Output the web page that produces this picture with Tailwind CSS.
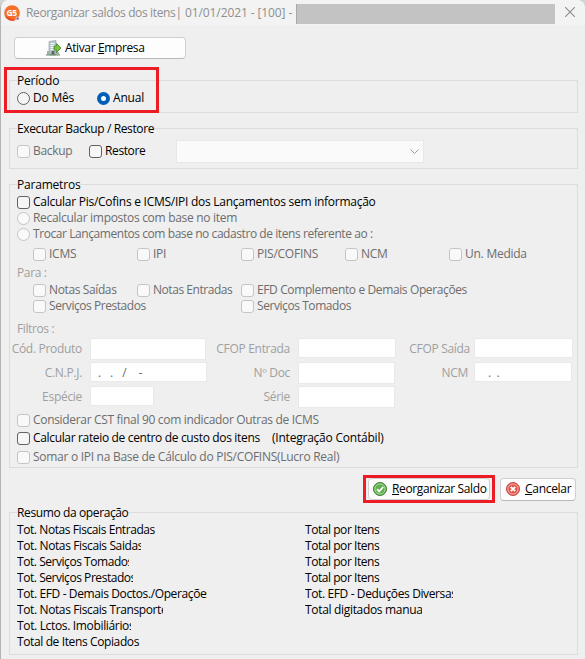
<!DOCTYPE html>
<html lang="pt-BR">
<head>
  <meta charset="UTF-8"/>
  <meta name="viewport" content="width=device-width, initial-scale=1.0"/>
  <title>Reorganizar saldos dos itens</title>
  <script src="https://cdn.jsdelivr.net/npm/@tailwindcss/browser@4"></script>
</head>
<body class="bg-[#d4d4d4]">

  <div class="relative w-[585px] h-[659px] overflow-hidden rounded-t-lg border-l border-[#b4b4b4] bg-[#efefef] pl-2 font-['Open_Sans','Noto_Sans',sans-serif] text-[12px] leading-4 tracking-[-0.38px] text-black whitespace-nowrap">

    <!-- Title bar -->
    <div class="-ml-2 flex h-[25px] items-center bg-[#f3f3f3] pl-[3px] text-[#8f8f8f]">
      <svg class="h-4 w-4 shrink-0" viewBox="0 0 16 16">
        <circle cx="8" cy="8" r="7.8" fill="#f4702a"/>
        <path d="M1 11a7.8 7.8 0 0 0 10 4.200z" fill="#e8452c"/>
        <text x="7.600" y="11" text-anchor="middle" font-family="Open Sans" font-size="8.500" font-weight="700" fill="#fff">G5</text>
        <circle cx="13.500" cy="13.500" r="2" fill="#d9c8d4"/>
        <circle cx="13.500" cy="13.500" r="1" fill="#9a4560"/>
      </svg>
      <span class="ml-[6px] w-[159px] tracking-[-0.36px]">Reorganizar saldos dos itens|</span>
      <span class="tracking-[-0.1px]">01/01/2021 - [100] - </span>
      <div class="absolute left-[295px] top-1 h-5 w-[259px] border-l border-[#a8a8a8] bg-[#c3c3c3]"></div>
      <svg class="absolute left-[564px] top-[7px] h-[10px] w-[10px]" viewBox="0 0 10 10" stroke="#8c8c8c" stroke-width="1.100"><path d="M0 0l10 10M10 0L0 10"/></svg>
    </div>

    <button class="mt-3 ml-[5px] flex h-[22px] w-[172px] items-center rounded-[4px] border border-[#d0d0d0] border-b-[#b8b8b8] bg-[#fdfdfd] pl-[31px]">
      <svg class="h-4 w-[15px]" viewBox="0 0 15 16">
        <path d="M3 1.500L10 .5V15H3z" fill="#b9c8d0" stroke="#8b9aa2" stroke-width=".6"/>
        <path d="M4.500 3.500h4M4.500 5.500h4M4.500 7.500h4M4.500 9.500h4" stroke="#f4f8fa"/>
        <path d="M5.500 11h3v4h-3z" fill="#59656b"/>
        <path d="M0 14.300h14v1.200H0z" fill="#6d8f6a"/>
        <path d="M1 11h3v3.500H1zM10 12h3v2.500h-3z" fill="#9fb39c"/>
        <path d="M8 6h2.500V3.500L15 8l-4.500 4.500V10H8z" fill="#7cc142" stroke="#3b8a22" stroke-width=".8"/>
      </svg>
      <span class="ml-1">Ativar <u class="underline-offset-1">E</u>mpresa</span>
    </button>

    <!-- Período -->
    <div class="mt-[21px] h-[33px] w-[569px] border border-[#dcdcdc] pl-[7px] tracking-[-0.2px]">
      <div class="-mt-2 w-fit bg-[#efefef]">Período</div>
      <div class="mt-px flex h-4 items-center">
        <span class="h-[13px] w-[13px] rounded-full border border-[#626262] bg-[#f6f6f6]"></span>
        <span class="ml-[3px] w-[64px]">Do Mês</span>
        <span class="h-[13px] w-[13px] rounded-full border-4 border-[#005fb8] bg-white"></span>
        <span class="ml-[3px]">Anual</span>
      </div>
    </div>

    <!-- Executar Backup / Restore -->
    <div class="mt-[15px] h-[41px] w-[569px] border border-[#dcdcdc] pl-[7px]">
      <div class="-mt-2 w-fit bg-[#efefef]">Executar Backup / Restore</div>
      <div class="mt-[3px] flex h-[23px] items-center">
        <span class="h-[13px] w-[13px] rounded-[3px] border border-[#c5c5c5] bg-[#f9f9f9]"></span>
        <span class="-mt-px ml-[3px] w-[56px] text-[#6d6d6d] tracking-[-0.3px]">Backup</span>
        <span class="h-[13px] w-[13px] rounded-[3px] border border-[#626262] bg-[#f6f6f6]"></span>
        <span class="-mt-px ml-[3px] w-[71px]">Restore</span>
        <div class="flex h-[23px] w-[248px] items-center justify-end border border-[#e8e8e8] bg-[#fafafa] pr-1">
          <svg class="h-[5px] w-[9px]" viewBox="0 0 9 5" fill="none" stroke="#a0a0a0"><path d="M.5.5l4 4 4-4"/></svg>
        </div>
      </div>
    </div>

    <!-- Parametros -->
    <div class="mt-[15px] h-[284px] w-[569px] border border-[#dcdcdc] pl-[7px] text-[#6d6d6d]">
      <div class="-mt-2 w-fit bg-[#efefef] text-black tracking-[-0.2px]">Parametros</div>
      <div class="mt-px flex h-4 items-center gap-[3px] text-black">
        <span class="h-[13px] w-[13px] rounded-[3px] border border-[#626262] bg-[#f6f6f6]"></span>
        <span class="tracking-[-0.26px]">Calcular Pis/Cofins e ICMS/IPI dos Lançamentos sem informação</span>
      </div>
      <div class="flex h-4 items-center gap-[3px]">
        <span class="h-[13px] w-[13px] rounded-full border border-[#c5c5c5] bg-[#f9f9f9]"></span>
        <span class="tracking-[-0.3px]">Recalcular impostos com base no item</span>
      </div>
      <div class="flex h-4 items-center gap-[3px]">
        <span class="h-[13px] w-[13px] rounded-full border border-[#c5c5c5] bg-[#f9f9f9]"></span>
        <span class="tracking-[-0.43px]">Trocar Lançamentos com base no cadastro de itens referente ao :</span>
      </div>

      <div class="mt-1 ml-4 grid h-4 grid-cols-[repeat(5,104px)] tracking-[-0.25px]">
        <div class="flex items-center gap-[3px]"><span class="h-[13px] w-[13px] rounded-[3px] border border-[#c5c5c5] bg-[#f9f9f9]"></span><span>ICMS</span></div>
        <div class="flex items-center gap-[3px]"><span class="h-[13px] w-[13px] rounded-[3px] border border-[#c5c5c5] bg-[#f9f9f9]"></span><span>IPI</span></div>
        <div class="flex items-center gap-[3px]"><span class="h-[13px] w-[13px] rounded-[3px] border border-[#c5c5c5] bg-[#f9f9f9]"></span><span>PIS/COFINS</span></div>
        <div class="flex items-center gap-[3px]"><span class="h-[13px] w-[13px] rounded-[3px] border border-[#c5c5c5] bg-[#f9f9f9]"></span><span>NCM</span></div>
        <div class="flex items-center gap-[3px]"><span class="h-[13px] w-[13px] rounded-[3px] border border-[#c5c5c5] bg-[#f9f9f9]"></span><span>Un. Medida</span></div>
      </div>

      <div class="mt-[3px] h-4 text-[#a0a0a0]">Para :</div>
      <div class="mt-px ml-4 grid grid-cols-[104px_104px_auto] auto-rows-[16px]">
        <div class="flex items-center gap-[3px]"><span class="h-[13px] w-[13px] rounded-[3px] border border-[#c5c5c5] bg-[#f9f9f9]"></span><span>Notas Saídas</span></div>
        <div class="flex items-center gap-[3px]"><span class="h-[13px] w-[13px] shrink-0 rounded-[3px] border border-[#c5c5c5] bg-[#f9f9f9]"></span><span class="tracking-[-0.45px]">Notas Entradas</span></div>
        <div class="flex items-center gap-[3px]"><span class="h-[13px] w-[13px] rounded-[3px] border border-[#c5c5c5] bg-[#f9f9f9]"></span><span>EFD Complemento e Demais Operações</span></div>
        <div class="col-span-2 flex items-center gap-[3px]"><span class="h-[13px] w-[13px] rounded-[3px] border border-[#c5c5c5] bg-[#f9f9f9]"></span><span class="tracking-[-0.45px]">Serviços Prestados</span></div>
        <div class="flex items-center gap-[3px]"><span class="h-[13px] w-[13px] rounded-[3px] border border-[#c5c5c5] bg-[#f9f9f9]"></span><span class="tracking-[-0.43px]">Serviços Tomados</span></div>
      </div>

      <!-- Filtros -->
      <div class="mt-[7px] h-4 text-[#a0a0a0]">Filtros :</div>
      <div class="-ml-[7px] mt-px grid grid-cols-[72px_8px_117px_83px_8px_98px_79px_98px] auto-rows-[24px] text-right text-[#a0a0a0] tracking-[-0.3px]">
        <span class="pt-[3px]">Cód. Produto</span>
        <div class="col-start-3 h-[22px] w-[116px] border border-[#e9e9e9] bg-white"></div>
        <span class="pt-[3px]">CFOP Entrada</span>
        <div class="col-start-6 h-5 w-[98px] border border-[#e9e9e9] bg-white"></div>
        <span class="pt-[3px] pr-[5px]">CFOP Saída</span>
        <div class="-ml-px h-5 w-[99px] border border-[#e9e9e9] bg-white"></div>

        <span class="pt-[3px]">C.N.P.J.</span>
        <div class="col-start-3 h-5 w-[117px] border border-[#e9e9e9] bg-white pl-[7px] text-left text-[#6d6d6d] leading-[19px] whitespace-pre tracking-[-0.1px]">.   .   /    -</div>
        <span class="pt-[3px]">Nº Doc</span>
        <div class="col-start-6 h-[22px] w-[97px] border border-[#e9e9e9] bg-white"></div>
        <span class="pt-[3px] pr-[7px]">NCM</span>
        <div class="-ml-px h-5 w-[98px] border border-[#e9e9e9] bg-white pl-[13px] text-left text-[#6d6d6d] leading-[19px] whitespace-pre">.  .</div>

        <span class="pt-[3px]">Espécie</span>
        <div class="col-start-3 h-5 w-[64px] border border-[#e9e9e9] bg-white"></div>
        <span class="pt-[3px]">Série</span>
        <div class="col-start-6 h-[22px] w-[97px] border border-[#e9e9e9] bg-white"></div>
      </div>

      <div class="mt-[2px] flex h-4 items-center gap-[3px]">
        <span class="h-[13px] w-[13px] rounded-[3px] border border-[#c5c5c5] bg-[#f9f9f9]"></span>
        <span class="tracking-[-0.32px]">Considerar CST final 90 com indicador Outras de ICMS</span>
      </div>
      <div class="mt-[2px] flex h-4 items-center gap-[3px] text-black">
        <span class="h-[13px] w-[13px] rounded-[3px] border border-[#626262] bg-[#f6f6f6]"></span>
        <span class="w-[236px] tracking-[-0.34px]">Calcular rateio de centro de custo dos itens</span>
        <span class="-mt-px tracking-[-0.22px]">(Integração Contábil)</span>
      </div>
      <div class="mt-[3px] flex h-4 items-center gap-[3px]">
        <span class="h-[13px] w-[13px] rounded-[3px] border border-[#c5c5c5] bg-[#f9f9f9]"></span>
        <span class="tracking-[-0.28px]">Somar o IPI na Base de Cálculo do PIS/COFINS(Lucro Real)</span>
      </div>
    </div>

    <!-- Buttons -->
    <div class="mt-[7px] ml-[354px] flex h-7 items-center gap-[5px]">
      <div class="h-7 w-[132px] border-[3px] border-[#ed1c24] px-[2px]">
        <button class="flex h-[22px] w-[122px] items-center rounded-[4px] border border-[#d0d0d0] bg-[#fdfdfd] pl-1">
          <svg class="h-[14px] w-[14px]" viewBox="0 0 14 14">
            <circle cx="7" cy="7" r="6.500" fill="#5fb04c" stroke="#3c7f35"/>
            <circle cx="7" cy="7" r="5.100" fill="none" stroke="#b5deaa" stroke-width=".9"/>
            <path d="M4 7.200l2.200 2.200L10.200 5" fill="none" stroke="#fff" stroke-width="1.800"/>
          </svg>
          <span class="ml-[5px]"><u class="underline-offset-1">R</u>eorganizar Saldo</span>
        </button>
      </div>
      <button class="flex h-[23px] w-[76px] items-center rounded-[4px] border border-[#d0d0d0] border-b-[#b8b8b8] bg-[#fdfdfd] pl-[5px]">
        <svg class="h-[14px] w-[14px]" viewBox="0 0 14 14">
          <circle cx="7" cy="7" r="6.500" fill="#e2574c" stroke="#c5473f"/>
          <circle cx="7" cy="7" r="5.100" fill="none" stroke="#f6bdb7" stroke-width=".9"/>
          <path d="M4.800 4.800l4.400 4.400M9.200 4.800L4.800 9.200" stroke="#fff" stroke-width="1.900"/>
        </svg>
        <span class="ml-[5px] tracking-[-0.3px]"><u class="underline-offset-1">C</u>ancelar</span>
      </button>
    </div>

    <!-- Resumo da operação -->
    <div class="mt-[9px] h-[143px] w-[569px] border border-[#dcdcdc] pl-[7px]">
      <div class="-mt-2 w-fit bg-[#efefef]">Resumo da operação</div>
      <div class="mt-px flex">
        <div class="w-[288px]">
          <div class="tracking-[-0.42px]">Tot. Notas Fiscais Entradas</div>
          <div class="w-[124px] overflow-hidden">Tot. Notas Fiscais Saidas</div>
          <div class="w-[112px] overflow-hidden tracking-[-0.45px]">Tot. Serviços Tomados</div>
          <div class="w-[116px] overflow-hidden tracking-[-0.45px]">Tot. Serviços Prestados</div>
          <div class="w-[190px] overflow-hidden">Tot. EFD - Demais Doctos./Operações</div>
          <div class="w-[146px] overflow-hidden">Tot. Notas Fiscais Transporte</div>
          <div class="w-[114px] overflow-hidden tracking-[-0.34px]">Tot. Lctos. Imobiliários</div>
          <div>Total de Itens Copiados</div>
        </div>
        <div>
          <div class="tracking-[-0.45px]">Total por Itens</div>
          <div class="tracking-[-0.45px]">Total por Itens</div>
          <div class="tracking-[-0.45px]">Total por Itens</div>
          <div class="tracking-[-0.45px]">Total por Itens</div>
          <div class="w-[148px] overflow-hidden">Tot. EFD - Deduções Diversas</div>
          <div class="w-[117px] overflow-hidden tracking-[-0.32px]">Total digitados manual</div>
        </div>
      </div>
    </div>

    <!-- Highlight around Período -->
    <div class="absolute left-[3px] top-[67px] h-[46px] w-[155px] border-[3px] border-[#ed1c24]"></div>
  </div>
</body>
</html>
